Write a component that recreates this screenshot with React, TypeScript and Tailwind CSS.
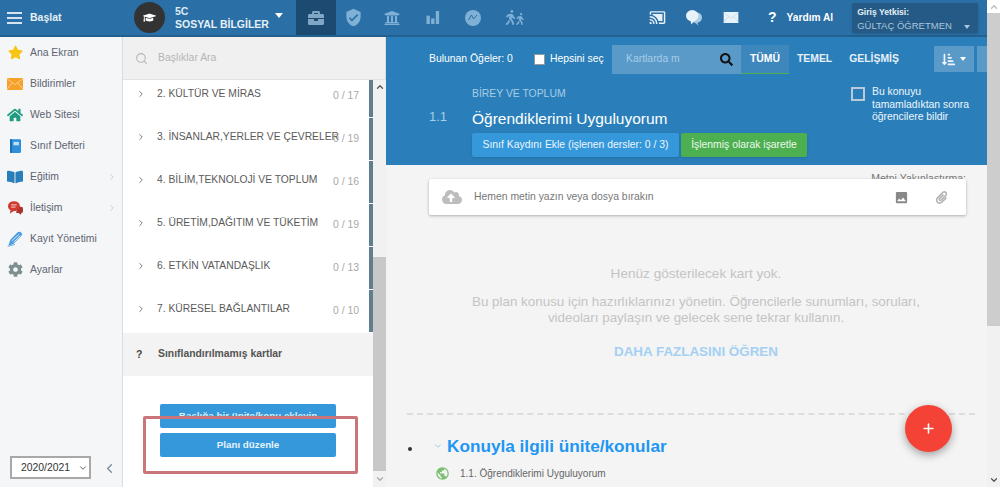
import React from "react";
import { FaStar, FaHome, FaBookOpen, FaCog, FaUniversity, FaBriefcase, FaWalking, FaCloudUploadAlt, FaSortAmountDownAlt, FaGraduationCap, FaSearch, FaPaperclip } from "react-icons/fa";
import { MdVerifiedUser, MdImage, MdPublic, MdCastConnected } from "react-icons/md";
import { ChevronRight, ChevronDown, ChevronLeft, ChevronUp, Search, Plus } from "lucide-react";

const Envelope = ({ className, stroke }: { className?: string; stroke: string }) => (
  <svg viewBox="0 0 24 18" className={className}>
    <rect x="0" y="0" width="24" height="18" fill="currentColor" />
    <path d="M0 1 L12 10 L24 1 M0 17 L8 7 M24 17 L16 7" fill="none" stroke={stroke} strokeWidth="1" />
  </svg>
);

const Notebook = () => (
  <svg viewBox="0 0 16 20" className="w-[11px] h-[14px]">
    <rect x="1" y="0" width="15" height="20" rx="1.5" fill="#2f8fdc" />
    <rect x="0" y="0" width="3" height="20" fill="#1f6fb0" />
    <rect x="5" y="4" width="8" height="5" fill="#bfe0f7" />
  </svg>
);

const Chat = () => (
  <svg viewBox="0 0 24 22" className="w-[15px] h-[14px]">
    <path d="M15 9h6a3 3 0 0 1 3 3v4a3 3 0 0 1-3 3v3l-4-3h-4z" fill="#a8342c" />
    <ellipse cx="9.5" cy="8" rx="9.5" ry="8" fill="#d0392f" />
    <path d="M4 14 L3 20 L10 15z" fill="#d0392f" />
    <path d="M5 6h9M5 9.5h7" stroke="#fff" strokeWidth="1.3" />
  </svg>
);

const Pen = () => (
  <svg viewBox="0 0 24 24" className="w-[16px] h-[16px]">
    <path d="M2 22 L5 13 L16 2 Q19 0 22 3 Q24 6 21 8 L10 19z" fill="#4d9be0" />
    <path d="M7 15 L18 5 M10 17 L20 7" stroke="#f4f6f8" strokeWidth="1.3" />
    <path d="M1 23 L12 20" stroke="#4d9be0" strokeWidth="1.2" />
  </svg>
);

const Bars = () => (
  <svg viewBox="0 0 14 14" className="w-[14px] h-[13px]" fill="currentColor">
    <rect x="0" y="5" width="3.6" height="9" />
    <rect x="5" y="8" width="3.6" height="6" />
    <rect x="10" y="0" width="3.6" height="14" />
  </svg>
);

const Gauge = () => (
  <svg viewBox="0 0 16 16" className="w-[16px] h-[16px]">
    <circle cx="8" cy="8" r="8" fill="currentColor" />
    <path d="M3.5 10 L6.5 5 L8.5 9 L12 5" fill="none" stroke="#2a6fa5" strokeWidth="1" />
  </svg>
);

const Bubbles = () => (
  <svg viewBox="0 0 18 18" className="w-[16px] h-[17px]">
    <ellipse cx="11.5" cy="9" rx="6.5" ry="6" fill="#a9cde6" />
    <path d="M12 13 L14 18 L9 14z" fill="#a9cde6" />
    <ellipse cx="7" cy="7" rx="7" ry="6.5" fill="#e8f2f9" />
    <path d="M5 12 L6 17 L10 12z" fill="#e8f2f9" />
  </svg>
);

const menu: [React.ReactNode, string, boolean][] = [
  [<FaStar className="text-[#f6c515] text-[15px]" />, "Ana Ekran", false],
  [<Envelope className="w-[16px] h-[12px] text-[#f5a12a]" stroke="#fde3b8" />, "Bildirimler", false],
  [<FaHome className="text-[#1f9c80] text-[16px]" />, "Web Sitesi", false],
  [<Notebook />, "Sınıf Defteri", false],
  [<FaBookOpen className="text-[#2a7fba] text-[16px]" />, "Eğitim", true],
  [<Chat />, "İletişim", true],
  [<Pen />, "Kayıt Yönetimi", false],
  [<FaCog className="text-[#7d8f8f] text-[15px]" />, "Ayarlar", false],
];

const rows: [string, string, number][] = [
  ["2. KÜLTÜR VE MİRAS", "0 / 17", 38],
  ["3. İNSANLAR,YERLER VE ÇEVRELER", "0 / 19", 43],
  ["4. BİLİM,TEKNOLOJİ VE TOPLUM", "0 / 16", 43],
  ["5. ÜRETİM,DAĞITIM VE TÜKETİM", "0 / 19", 43],
  ["6. ETKİN VATANDAŞLIK", "0 / 13", 43],
  ["7. KÜRESEL BAĞLANTILAR", "0 / 10", 43],
];

function Row({ title, count, h }: { title: string; count: string; h: number }) {
  return (
    <div className="flex border-b border-white" style={{ height: h }}>
      <div className={`flex-1 flex items-start pl-[13px] ${h === 38 ? "pt-[7px]" : "pt-[12px]"}`}>
        <ChevronRight className="w-[10px] h-[10px] mt-[2px] text-[#666] shrink-0" strokeWidth={2} />
        <span className="ml-[11px] text-[10.3px] leading-[14px] text-[#5a5a5a] whitespace-nowrap w-[177px]">{title}</span>
        <span className="text-[10.4px] leading-[14px] text-[#a9a9a9] mt-[2px] ml-[-1px] w-[26px] text-right whitespace-nowrap">{count}</span>
      </div>
      <div className="w-[4px] bg-[#5f7f8f]" />
    </div>
  );
}

export default function App() {
  return (
    <div className="flex w-full h-[487px] overflow-hidden bg-[#f4f4f4] font-['Liberation_Sans',Arial,sans-serif] relative">
      <div className="flex-1 min-w-0 flex flex-col">
        {/* Top bar */}
        <header className="h-[37px] shrink-0 bg-[#2a6fa5] border-b-2 border-[#22608f] flex items-center text-white">
          <div className="w-[134px] shrink-0 flex items-center pl-[7px]">
            <div className="w-[15px] flex flex-col gap-[3px]">
              <span className="h-[2px] bg-[#d5e4f0]" />
              <span className="h-[2px] bg-[#d5e4f0]" />
              <span className="h-[2px] bg-[#d5e4f0]" />
            </div>
            <span className="ml-[8px] text-[10.5px] font-bold text-[#e6f0f7]">Başlat</span>
          </div>
          <div className="w-[31px] h-[31px] rounded-full bg-[#333] flex items-center justify-center shrink-0">
            <FaGraduationCap className="text-white text-[13px]" />
          </div>
          <div className="ml-[10px] w-[92px] shrink-0 leading-[13px] font-bold">
            <div className="text-[10.5px] text-[#dfeaf3]">5C</div>
            <div className="text-[10.5px] whitespace-nowrap text-[#e6f0f7]">SOSYAL BİLGİLER</div>
          </div>
          <div className="ml-[8px] mt-[-5px] w-0 h-0 border-x-[4px] border-x-transparent border-t-[5px] border-t-white" />
          <div className="ml-[13px] w-[40px] h-[35px] bg-[#1c4a70] flex items-center justify-center">
            <FaBriefcase className="text-[#7fa6c5] text-[16px]" />
          </div>
          <div className="flex items-center text-[#7fb0d6]">
            <MdVerifiedUser className="ml-[8px] text-[19px]" />
            <FaUniversity className="ml-[21px] text-[16px]" />
            <span className="ml-[26px]"><Bars /></span>
            <span className="ml-[25px]"><Gauge /></span>
            <span className="ml-[22px] flex"><FaWalking className="text-[15px]" /><FaWalking className="text-[12px] ml-[-4px] mt-[3px]" /></span>
          </div>
          <div className="ml-[123px] flex items-center">
            <MdCastConnected className="text-[17px] text-[#e6f0f7]" />
            <span className="ml-[20px]"><Bubbles /></span>
            <span className="ml-[21px]"><Envelope className="w-[16px] h-[11px] text-[#e8f2f9]" stroke="#b9d3e6" /></span>
            <span className="ml-[29px] text-[14px] font-bold">?</span>
            <span className="ml-[10px] text-[10.2px] font-bold whitespace-nowrap">Yardım Al</span>
            <div className="ml-[19px] w-[126px] h-[30px] rounded-[2px] bg-[#245a85] pl-[5px] pt-[4px] shadow-sm">
              <div className="text-[8.6px] leading-[10px] font-bold text-[#e6f0f7]">Giriş Yetkisi:</div>
              <div className="flex items-center mt-[3px] text-[9.5px] leading-[12px] text-[#a9c6dc] whitespace-nowrap">
                GÜLTAÇ ÖĞRETMEN
                <span className="ml-[12px] mt-[2px] w-0 h-0 border-x-[3.5px] border-x-transparent border-t-[4px] border-t-[#a9c6dc]" />
              </div>
            </div>
          </div>
        </header>

        <div className="flex-1 min-h-0 flex">
          {/* Sidebar */}
          <aside className="w-[123px] shrink-0 bg-[#f4f6f8] border-r border-[#dcdcdc] flex flex-col">
            <nav className="flex-1">
              {menu.map(([icon, label, arrow]) => (
                <div key={label} className="h-[31px] flex items-center">
                  <div className="w-[30px] flex justify-center shrink-0">{icon}</div>
                  <span className="text-[10.4px] text-[#5f6470] whitespace-nowrap">{label}</span>
                  {arrow && <ChevronRight className="ml-auto mr-[5px] w-[10px] h-[10px] text-[#c5c9cc]" strokeWidth={2} />}
                </div>
              ))}
            </nav>
            <div className="flex items-center pl-[10px] pb-[8px]">
              <div className="w-[81px] h-[23px] border-2 border-[#a8a8a8] bg-white flex items-center pl-[9px]">
                <span className="text-[10.4px] text-[#333]">2020/2021</span>
                <ChevronDown className="ml-[8px] w-[10px] h-[10px] text-[#444] shrink-0" />
              </div>
              <ChevronLeft className="ml-[11px] mt-[2px] w-[15px] h-[17px] text-[#78909c]" strokeWidth={2.2} />
            </div>
          </aside>

          {/* Middle */}
          <section className="w-[263px] shrink-0 flex flex-col bg-white border-r border-[#dcdcdc] relative">
            <div className="h-[43px] shrink-0 bg-[#f0f0f0] border-b border-[#e2e2e2] flex items-center pl-[12px]">
              <Search className="w-[13px] h-[13px] text-[#b5b5b5]" strokeWidth={2} />
              <span className="ml-[10px] text-[10.4px] text-[#b5b5b5]">Başlıklar Ara</span>
            </div>
            <div className="flex-1 min-h-0 flex">
              <div className="w-[250px] shrink-0 flex flex-col">
                {rows.map(([t, c, h]) => (
                  <Row key={t} title={t} count={c} h={h} />
                ))}
                <div className="h-[43px] bg-[#f3f3f3] flex items-center pl-[13px] text-[10.4px] font-bold text-[#555]">
                  <span className="w-[22px] text-[#444]">?</span>
                  <span className="mt-[-2px]">Sınıflandırılmamış kartlar</span>
                </div>
                <div className="pl-[37px] pt-[28px]">
                  <div className="w-[176px] h-[24px] rounded-[2px] bg-[#3498db] flex justify-center overflow-hidden">
                    <span className="h-[12px] overflow-hidden text-[9.8px] font-bold leading-[24px] text-[#d8ecf9] whitespace-nowrap">Başlığa bir ünite/konu ekleyin</span>
                  </div>
                  <div className="mt-[5px] w-[176px] h-[24px] rounded-[2px] bg-[#3498db] flex items-center justify-center text-[9.8px] font-bold text-[#e6f3fb]">
                    Planı düzenle
                  </div>
                </div>
              </div>
              <div className="w-[13px] shrink-0 bg-[#f1f1f1] flex flex-col items-center">
                <ChevronUp className="w-[10px] h-[10px] text-[#555] mt-[2px]" strokeWidth={3} />
                <div className="mt-[165px] w-full flex-1 bg-[#c8c8c8]" />
                <div className="h-[16px] w-full flex items-center justify-center bg-[#f1f1f1]">
                  <ChevronDown className="w-[10px] h-[10px] text-[#aaa]" strokeWidth={3} />
                </div>
              </div>
            </div>
          </section>

          {/* Right */}
          <main className="flex-1 min-w-0 flex flex-col overflow-hidden">
            <div className="h-[128px] shrink-0 bg-[#2a7fba] text-white">
              <div className="flex items-center h-[36px] mt-[4px] pl-[43px]">
                <span className="text-[10.4px] w-[105px] whitespace-nowrap">Bulunan Öğeler: 0</span>
                <span className="w-[11px] h-[11px] bg-white border border-[#999]" />
                <span className="ml-[5px] text-[10.4px] w-[62px] whitespace-nowrap">Hepsini seç</span>
                <div className="w-[129px] h-[29px] bg-[#5a9ac9] flex items-center pl-[14px]">
                  <span className="text-[10.4px] text-[#a8cde6]">Kartlarda m</span>
                  <FaSearch className="ml-auto mr-[8px] text-[13px] text-[#111]" />
                </div>
                <div className="w-[48px] h-[29px] bg-[#3e87bd] border-b border-[#4caf50] flex items-center justify-center text-[10.4px] font-bold">TÜMÜ</div>
                <span className="ml-[8px] text-[10.4px] font-bold text-[#e6f0f7]">TEMEL</span>
                <span className="ml-[17px] text-[10.4px] font-bold text-[#e6f0f7] whitespace-nowrap">GELİŞMİŞ</span>
                <div className="ml-[35px] w-[40px] h-[26px] bg-[#5a9ac9] flex items-center justify-center gap-[5px]">
                  <FaSortAmountDownAlt className="text-[13px] text-[#f0f6fb]" />
                  <span className="w-0 h-0 border-x-[3.5px] border-x-transparent border-t-[4px] border-t-white" />
                </div>
                <div className="ml-[3px] flex-1 h-[26px] bg-[#5a9ac9]" />
              </div>
              <div className="flex pl-[43px] mt-[10px]">
                <div className="w-[43px] pt-[22px] text-[13px] leading-[16px] text-[#a8cde6]">1.1</div>
                <div className="w-[379px]">
                  <div className="text-[10.4px] leading-[14px] text-[#a8cde6]">BİREY VE TOPLUM</div>
                  <div className="mt-[8px] text-[15.5px] leading-[20px] whitespace-nowrap">Öğrendiklerimi Uyguluyorum</div>
                  <div className="mt-[4px] flex gap-[2px]">
                    <div className="w-[207px] h-[24px] rounded-[2px] bg-[#3498db] flex items-center justify-center text-[10.4px] text-[#eef6fb] whitespace-nowrap shadow-sm">Sınıf Kaydını Ekle (işlenen dersler: 0 / 3)</div>
                    <div className="w-[126px] h-[24px] rounded-[2px] bg-[#4caf50] flex items-center justify-center text-[10.4px] text-[#eef8ee] whitespace-nowrap shadow-sm">İşlenmiş olarak işaretle</div>
                  </div>
                </div>
                <div className="flex items-start">
                  <span className="w-[14px] h-[14px] border-2 border-[#b9c9d6] shrink-0" />
                  <span className="ml-[7px] mt-[-1px] w-[104px] text-[10.4px] leading-[12.5px] text-[#eef6fb]">Bu konuyu tamamladıktan sonra öğrencilere bildir</span>
                </div>
              </div>
            </div>

            <div className="flex-1 min-h-0 relative pl-[43px]">
              <div className="w-[537px] h-[14px] overflow-hidden flex justify-end">
                <span className="mt-[7px] text-[10.5px] leading-[12px] text-[#777] whitespace-nowrap">Metni Yakınlaştırma:</span>
              </div>
              <div className="w-[537px] h-[36px] bg-white shadow-[0_1px_3px_rgba(0,0,0,0.3)] rounded-[2px] flex items-center pl-[13px] pr-[18px]">
                <FaCloudUploadAlt className="text-[20px] text-[#bdbdbd]" />
                <span className="ml-[12px] text-[10.4px] text-[#777]">Hemen metin yazın veya dosya bırakın</span>
                <MdImage className="ml-auto text-[15px] text-[#888]" />
                <FaPaperclip className="ml-[26px] text-[13px] text-[#b5b5b5]" />
              </div>
              <div className="mt-[50px] flex flex-col items-center text-center w-[620px] ml-[-43px]">
                <div className="text-[13.6px] leading-[18px] text-[#c4c4c4]">Henüz gösterilecek kart yok.</div>
                <div className="mt-[11px] w-[480px] text-[13.4px] leading-[16px] text-[#c4c4c4]">Bu plan konusu için hazırlıklarınızı yönetin. Öğrencilerle sunumları, soruları, videoları paylaşın ve gelecek sene tekrar kullanın.</div>
                <div className="mt-[18px] text-[13.4px] font-bold leading-[16px] text-[#a3d0f3]">DAHA FAZLASINI ÖĞREN</div>
              </div>
              <div className="mt-[53px] ml-[-22px] w-[568px] border-t-2 border-dashed border-[#dddddd]" />
              <div className="flex items-center mt-[20px] ml-[-21px]">
                <span className="w-[4px] h-[4px] rounded-full bg-[#333] mt-[6px]" />
                <ChevronDown className="ml-[21px] w-[10px] h-[10px] text-[#90c3ee]" strokeWidth={2} />
                <span className="ml-[4px] text-[17.2px] font-bold leading-[22px] text-[#2196f3] whitespace-nowrap">Konuyla ilgili ünite/konular</span>
              </div>
              <div className="flex items-center mt-[9px] ml-[6px]">
                <MdPublic className="text-[15px] text-[#7cbf73]" />
                <span className="ml-[10px] text-[10px] text-[#666] whitespace-nowrap">1.1. Öğrendiklerimi Uyguluyorum</span>
              </div>
            </div>
          </main>
        </div>
      </div>

      {/* Page scrollbar */}
      <div className="w-[13px] shrink-0 bg-[#f1f1f1] flex flex-col items-center">
        <div className="h-[13px] w-full bg-white flex items-center justify-center">
          <ChevronUp className="w-[10px] h-[10px] text-[#bbb]" strokeWidth={3} />
        </div>
        <div className="h-[313px] w-full bg-[#cdcdcd]" />
        <ChevronDown className="mt-auto mb-[2px] w-[10px] h-[10px] text-[#555]" strokeWidth={3} />
      </div>

      {/* Annotation over the screenshot */}
      <div className="absolute left-[143px] top-[416px] w-[215px] h-[58px] border-[3px] border-[#c9757a] rounded-[2px]" />

      {/* Floating action button */}
      <div className="absolute left-[905px] top-[405px] w-[47px] h-[47px] rounded-full bg-[#f44336] shadow-[0_3px_8px_rgba(0,0,0,0.35)] flex items-center justify-center">
        <Plus className="w-[15px] h-[15px] text-white" strokeWidth={2.5} />
      </div>
    </div>
  );
}
